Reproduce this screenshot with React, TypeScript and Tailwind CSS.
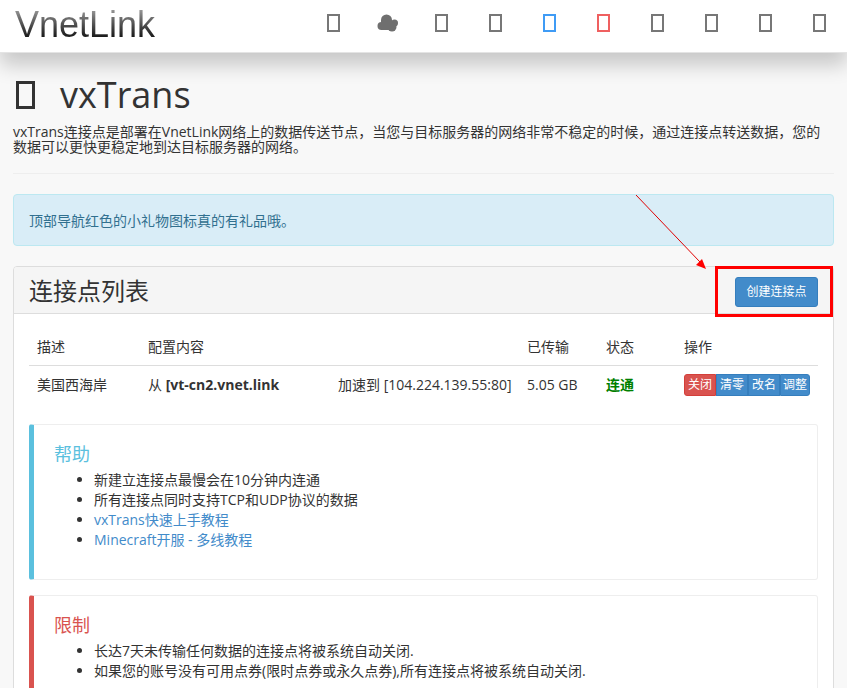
import React from "react";

const font = { fontFamily: '"Open Sans","Noto Sans CJK SC",sans-serif' };

function Tofu({ color }: { color: string }) {
  return <span className={`block w-[13px] h-[18px] border-2 ${color}`} />;
}

function Cloud() {
  return (
    <svg width="23" height="18" viewBox="0 0 21 18" className="block fill-[#6f6f6f]">
      <circle cx="9.5" cy="6" r="5.5" />
      <circle cx="4.5" cy="12" r="4" />
      <circle cx="17.5" cy="9" r="3.5" />
      <circle cx="15" cy="13" r="4.5" />
      <rect x="4" y="6" width="11" height="10" />
    </svg>
  );
}

const navColors = [
  "border-[#777]",
  "",
  "border-[#777]",
  "border-[#777]",
  "border-[#3f9bf5]",
  "border-[#ef6060]",
  "border-[#777]",
  "border-[#777]",
  "border-[#777]",
  "border-[#777]",
];

function Nav() {
  return (
    <header className="relative z-10 h-[53px] bg-white flex items-center justify-between pl-[15px] pr-[1px] border-b border-[#e4e4e4] shadow-[0_12px_20px_rgba(0,0,0,0.2)]">
      <div
        className="text-[36px] leading-[50px] mb-[3px] bg-gradient-to-b from-[#cccccc] to-[#000000] bg-clip-text text-transparent"
        style={{ fontFamily: '"Liberation Sans",sans-serif' }}
      >
        VnetLink
      </div>
      <nav className="flex mb-[6px]">
        {navColors.map((c, i) => (
          <div key={i} className="w-[54px] h-[18px] flex justify-center">
            {c ? <Tofu color={c} /> : <Cloud />}
          </div>
        ))}
      </nav>
    </header>
  );
}

function Callout({
  title,
  accent,
  titleColor,
  items,
  className,
}: {
  title: string;
  accent: string;
  titleColor: string;
  items: { text: string; link?: boolean }[];
  className: string;
}) {
  return (
    <section className={`border border-[#eeeeee] border-l-[5px] rounded-[3px] pt-[19px] pl-[20px] ${accent} ${className}`}>
      <h4 className={`text-[18px] leading-[20px] mb-[6px] ${titleColor}`}>{title}</h4>
      <ul className="list-disc pl-[40px] text-[14px] leading-[20px] text-[#333]">
        {items.map((it) => (
          <li key={it.text} className={it.link ? "text-[#428bca] marker:text-[#333]" : ""}>
            {it.text}
          </li>
        ))}
      </ul>
    </section>
  );
}

export default function App() {
  return (
    <div className="relative h-[688px] overflow-hidden bg-[#f8f8f8] text-[#333]" style={font}>
      <Nav />
      <main className="px-[13px]">
        <h1 className="flex items-center mt-[19px] h-[46px] text-[36px] leading-[40px]">
          <span className="block w-[19px] h-[28px] ml-[3px] border-[3px] border-[#333]" />
          <span className="ml-[25px]">vxTrans</span>
        </h1>
        <p className="mt-[6px] text-[14px] leading-[15px] w-[821px]">
          vxTrans连接点是部署在VnetLink网络上的数据传送节点，当您与目标服务器的网络非常不稳定的时候，通过连接点转送数据，您的数据可以更快更稳定地到达目标服务器的网络。
        </p>
        <hr className="mt-[19px] border-t border-[#eeeeee]" />
        <div className="mt-[20px] h-[52px] flex items-center px-[15px] rounded-[4px] border border-[#bce8f1] bg-[#d9edf7] text-[#31708f] text-[14px]">
          顶部导航红色的小礼物图标真的有礼品哦。
        </div>
        <section className="mt-[20px] h-[600px] rounded-[4px] border border-[#dddddd] bg-white">
          <div className="relative h-[47px] flex items-center justify-between pl-[15px] pr-[15px] bg-[#f5f5f5] border-b border-[#dddddd] rounded-t-[3px]">
            <h2 className="text-[24px] leading-[30px] mt-[1px]">连接点列表</h2>
            <button className="h-[30px] w-[83px] mt-[3px] rounded-[3px] bg-[#428bca] border border-[#357ebd] text-white text-[12px]">
              创建连接点
            </button>
            <span className="absolute left-[701px] top-[-1px] w-[118px] h-[51px] border-[3px] border-[#ff0000]" />
          </div>
          <div className="px-[15px] pt-[15px]">
            <table className="w-[789px] table-fixed text-[14px] leading-[20px]">
              <colgroup>
                <col className="w-[111px]" />
                <col className="w-[379px]" />
                <col className="w-[79px]" />
                <col className="w-[78px]" />
                <col className="w-[142px]" />
              </colgroup>
              <thead>
                <tr className="border-b border-[#dddddd]">
                  <th className="p-[8px] text-left font-normal">描述</th>
                  <th className="p-[8px] text-left font-normal">配置内容</th>
                  <th className="p-[8px] text-left font-normal">已传输</th>
                  <th className="p-[8px] text-left font-normal">状态</th>
                  <th className="p-[8px] text-left font-normal">操作</th>
                </tr>
              </thead>
              <tbody>
                <tr>
                  <td className="p-[8px] pt-[9px] align-top">美国西海岸</td>
                  <td className="p-[8px] pt-[9px] align-top whitespace-nowrap">
                    <span className="inline-block w-[190px]">
                      从 <b className="font-bold">[vt-cn2.vnet.link</b>
                    </span>
                    <span>加速到 [104.224.139.55:80]</span>
                  </td>
                  <td className="p-[8px] pt-[9px] align-top">5.05 GB</td>
                  <td className="p-[8px] pt-[9px] align-top font-bold text-[#008000]">连通</td>
                  <td className="p-[8px] pt-[8px] align-top">
                    <div className="flex h-[22px] w-[126px] text-[12px] leading-[20px] text-white">
                      <span className="w-[32px] text-center rounded-l-[3px] bg-[#d9534f] border border-[#d43f3a]">关闭</span>
                      <span className="w-[32px] text-center bg-[#428bca] border border-[#357ebd]">清零</span>
                      <span className="w-[32px] text-center bg-[#428bca] border border-[#357ebd]">改名</span>
                      <span className="w-[30px] text-center rounded-r-[3px] bg-[#428bca] border border-[#357ebd] overflow-hidden whitespace-nowrap">调整</span>
                    </div>
                  </td>
                </tr>
              </tbody>
            </table>
            <Callout
              className="mt-[20px] h-[156px]"
              title="帮助"
              accent="border-l-[#5bc0de]"
              titleColor="text-[#5bc0de]"
              items={[
                { text: "新建立连接点最慢会在10分钟内连通" },
                { text: "所有连接点同时支持TCP和UDP协议的数据" },
                { text: "vxTrans快速上手教程", link: true },
                { text: "Minecraft开服 - 多线教程", link: true },
              ]}
            />
            <Callout
              className="mt-[15px] h-[156px]"
              title="限制"
              accent="border-l-[#d9534f]"
              titleColor="text-[#d9534f]"
              items={[
                { text: "长达7天未传输任何数据的连接点将被系统自动关闭." },
                { text: "如果您的账号没有可用点券(限时点券或永久点券),所有连接点将被系统自动关闭." },
              ]}
            />
          </div>
        </section>
      </main>
      <svg className="absolute left-0 top-0 z-20 pointer-events-none" width="847" height="688">
        <line x1="636" y1="195" x2="700" y2="262" stroke="#e00000" strokeWidth="1" />
        <polygon points="706,269 696,265 702,259" fill="#ff0000" />
      </svg>
    </div>
  );
}
